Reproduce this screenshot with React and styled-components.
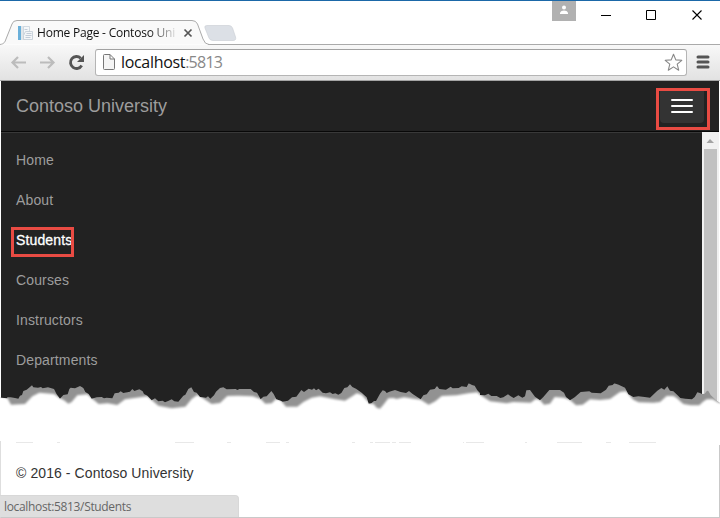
import React from "react";
import styled, { createGlobalStyle } from "styled-components";

const Global = createGlobalStyle`
  * { box-sizing: border-box; }
  body { margin: 0; background: #fff; overflow: hidden; }
`;

const Window = styled.div`
  width: 720px;
  height: 518px;
  display: flex;
  flex-direction: column;
  background: #fff;
  overflow: hidden;
  font-family: "Liberation Sans", Arial, sans-serif;
`;

const TitleBar = styled.div`
  display: flex;
  justify-content: space-between;
  height: 45px;
  flex: none;
  border-top: 1px solid #1b68a8;
`;

const TabStrip = styled.div`
  position: relative;
  width: 240px;
  height: 44px;
`;

const TabShape = styled.svg`
  position: absolute;
  left: 0;
  top: 0;
`;

const TabContent = styled.div`
  position: relative;
  display: flex;
  align-items: center;
  height: 20px;
  margin-top: 22px;
  padding-left: 17px;
`;

const TabTitle = styled.span`
  width: 140px;
  margin-left: 3px;
  white-space: nowrap;
  font: 12px/20px "Open Sans", sans-serif;
  letter-spacing: -0.22px;
  color: #111;
  mask-image: linear-gradient(to right, #000 112px, transparent 142px);
`;

const WindowButtons = styled.div`
  display: flex;
  align-items: flex-start;
`;

const UserBadge = styled.div`
  display: flex;
  width: 24px;
  height: 20px;
  background: #b1b1b1;
`;

const Controls = styled.svg`
  display: block;
`;

const Toolbar = styled.div`
  display: flex;
  align-items: center;
  height: 36px;
  flex: none;
  padding: 0 0 1px 10px;
  background: linear-gradient(#f8f8f8, #e2e2e2);
  border-bottom: 1px solid #a5a5a5;
`;

const NavIcons = styled.svg`
  display: block;
  width: 85px;
  flex: none;
`;

const AddressBar = styled.div`
  display: flex;
  align-items: center;
  width: 592px;
  height: 27px;
  padding: 0 3px 0 7px;
  background: #fff;
  border: 1px solid #b5b5b5;
  border-top-color: #a2a2a2;
  border-radius: 3px;
`;

const Url = styled.span`
  flex: 1;
  margin-left: 6px;
  font: 16px/24px "Open Sans", sans-serif;
  letter-spacing: -0.32px;
  color: #111;
`;

const Port = styled.span`
  color: #888;
  letter-spacing: -0.75px;
`;

const MenuIcon = styled.svg`
  display: block;
  margin-left: 9px;
`;

const Navbar = styled.header`
  display: flex;
  justify-content: space-between;
  align-items: flex-start;
  height: 51px;
  flex: none;
  margin: 0 1px;
  padding-left: 15px;
  background: #222;
  border-bottom: 1px solid #080808;
`;

const Brand = styled.span`
  font-size: 18px;
  line-height: 50px;
  color: #9d9d9d;
`;

const Highlight = styled.div`
  width: ${(p) => p.$w}px;
  height: ${(p) => p.$h}px;
  border: 3px solid #e94b43;
`;

const ToggleHighlight = styled(Highlight)`
  margin: 7px 9px 0 0;
`;

const Toggle = styled.div`
  display: flex;
  flex-direction: column;
  align-items: center;
  gap: 4px;
  width: 44px;
  height: 32px;
  margin-left: 1px;
  padding-top: 8px;
  background: #333;
  border-radius: 0 0 4px 4px;
`;

const Bar = styled.span`
  width: 22px;
  height: 2px;
  border-radius: 1px;
  background: #fff;
`;

const Body = styled.div`
  position: relative;
  display: flex;
  height: 285px;
  flex: none;
`;

const Menu = styled.nav`
  flex: 1;
  height: 249px;
  margin-left: 1px;
  padding: 7px 0 0 15px;
  background: #222;
  border-top: 1px solid #393939;
`;

const MenuItem = styled.div`
  position: relative;
  height: 40px;
  line-height: 40px;
  font-size: 14px;
  letter-spacing: 0.14px;
  color: ${(p) => (p.$active ? "#fff" : "#9d9d9d")};
  -webkit-text-stroke: ${(p) => (p.$active ? "0.3px #fff" : "0")};
`;

const ItemHighlight = styled(Highlight)`
  position: absolute;
  left: -5px;
  top: 7px;
`;

const Scrollbar = styled.div`
  display: flex;
  flex-direction: column;
  align-items: center;
  width: 17px;
  height: 249px;
  margin-right: 1px;
  background: #f1f1f1;
  padding-right: 1px;
`;

const Thumb = styled.div`
  width: 13px;
  flex: 1;
  background: #c1c1c1;
`;

const TornEdge = styled.svg`
  position: absolute;
  left: 0;
  bottom: 0;
`;

const Footer = styled.footer`
  display: flex;
  flex-direction: column;
  height: 101px;
  flex: none;
`;

const Remnants = styled.svg`
  display: block;
  flex: none;
  width: 720px;
`;

const FooterFrame = styled.div`
  display: flex;
  flex-direction: column;
  flex: 1;
  border: solid #c9c9c9;
  border-width: 0 1px 1px 1px;
  border-left-color: #dedede;
`;

const Copyright = styled.p`
  margin: 0;
  padding: 16px 0 0 15px;
  font-size: 14px;
  line-height: 24px;
  letter-spacing: 0.09px;
  color: #333;
`;

const Status = styled.div`
  width: 239px;
  height: 22px;
  margin-top: auto;
  margin-left: -1px;
  padding-left: 4px;
  background: #dedede;
  border-top: 1px solid #d8d8d8;
  border-right: 1px solid #d8d8d8;
  border-radius: 0 4px 0 0;
  font: 12px/22px "Open Sans", sans-serif;
  letter-spacing: -0.34px;
  color: #666;
`;

const tornTop =
  "3,68 22,70 22,67 32,67 45,69 55,71 60,62 66,60 70,48 80,44 96,31 100,37 114,38 123,36 128,40 144,37 162,42 170,58 180,71 190,60 203,58 208,42 212,38 225,40 240,33 250,39 256,51 266,57 275,71 290,67 305,66 312,70 320,68 337,70 344,55 356,53 362,49 370,54 390,50 397,42 403,48 418,43 428,49 432,57 442,62 455,76 465,70 475,79 488,77 495,82 506,77 515,73 523,79 535,80 550,62 556,59 565,42 574,37 582,51 590,53 600,66 618,68 624,64 631,71 642,61 648,50 660,39 670,37 680,43 707,42 712,45 718,42 752,42 762,51 771,53 777,64 782,73 790,65 800,64 814,48 821,57 829,73 842,77 848,80 864,77 876,67 889,65 904,45 912,51 926,41 936,44 942,40 948,46 956,41 968,53 978,55 990,52 998,57 1006,55 1015,59 1024,54 1033,39 1042,37 1050,28 1057,36 1068,41 1085,53 1100,67 1106,86 1114,85 1122,78 1128,78 1140,56 1148,46 1155,48 1160,54 1168,50 1185,45 1202,51 1218,54 1227,48 1238,57 1262,73 1270,61 1280,58 1290,44 1304,42 1311,33 1318,42 1338,44 1352,35 1358,40 1376,39 1385,34 1400,36 1406,25 1416,30 1424,32 1432,46 1440,54 1440,60 1455,61 1465,56 1474,63 1490,63 1501,69 1510,67 1524,58 1532,64 1541,69 1555,61 1567,68 1575,64 1579,46 1590,45 1605,65 1620,76 1630,66 1648,45 1680,45 1692,53 1698,66 1710,76 1724,67 1742,51 1768,49 1775,53 1802,55 1818,44 1826,32 1838,30 1843,25 1856,29 1875,38 1885,58 1900,66 1915,64 1934,66 1950,68 1972,47 1984,39 1993,44 2002,34 2010,47 2020,49 2032,60 2041,69 2056,71 2076,73 2084,66 2092,52 2100,54 2106,57 2114,56 2121,47 2125,48 2132,60 2148,76";

const tornBottom =
  "-80,66 3,66 22,70 33,90 75,88 97,65 118,54 162,58 180,71 192,77 205,87 215,82 232,62 262,59 275,71 296,88 323,86 352,91 375,74 425,67 442,65 455,76 475,93 515,101 556,96 575,73 592,61 603,67 635,88 660,85 682,64 715,63 758,65 782,73 796,87 815,86 828,73 842,77 858,96 892,96 910,82 935,69 960,65 1005,74 1035,78 1052,68 1070,56 1085,60 1110,87 1120,87 1130,99 1140,102 1152,88 1165,71 1180,70 1190,73 1212,68 1240,72 1262,75 1286,90 1306,80 1325,64 1370,62 1405,56 1432,53 1440,60 1470,80 1520,86 1540,82 1592,84 1607,73 1620,76 1632,90 1650,87 1664,67 1692,69 1710,76 1728,92 1748,90 1770,74 1800,76 1830,73 1860,52 1878,50 1900,75 1916,83 1960,84 1980,82 2000,64 2020,64 2030,70 2050,88 2072,92 2098,92 2108,82 2120,74 2138,74 2156,84 2240,84 2240,200 -80,200";

const dashes = [[16,33],[57,60],[175,194],[227,231],[266,280],[286,289],[352,355],[370,373],[375,390],[392,396],[399,411],[463,464],[466,484],[525,527],[557,582],[606,611],[629,656]];

const entries = ["Home", "About", "Students", "Courses", "Instructors", "Departments"];

const Favicon = () => (
  <svg width="17" height="16" viewBox="0 0 17 16">
    <path d="M1 1h3v14H1z" fill="#6ab0da" />
    <path d="M4 1h4v14H4z" fill="#e1e6ea" />
    <path d="M6.500 1.500h6v8h-6z" fill="#f4f7f9" stroke="#c8d2dc" strokeWidth=".8" />
    <path d="M8.500 6.500h7v8h-9v-4z" fill="#f4f6f8" stroke="#c0cad4" strokeWidth=".8" />
    <path d="M7.500 4.500h3M9.500 8.500h5M8.500 10.500h6M8.500 12.500h5" stroke="#c2ccd8" />
  </svg>
);

export default function App() {
  return (
    <Window>
      <Global />
      <TitleBar>
        <TabStrip>
          <TabShape width="720" height="44" viewBox="0 1 720 44">
            <path d="M0 44.5C4 44 5 42 6 39L12 24Q13 20.500 17 20.500H192Q196 20.500 197.500 24L203 39Q205 44.500 209 44.500" fill="#f9f9f9" stroke="#aaa" />
            <path d="M208 44.500H720" stroke="#aaa" />
            <path d="M207 25.500H229Q231.500 25.500 232.500 28L235.500 37Q236.500 40.500 233 40.500H213Q210 40.500 209 38L205 28Q204 25.500 207 25.500Z" fill="#dce0e6" stroke="#cdd1d7" strokeWidth=".7" />
          </TabShape>
          <TabContent>
            <Favicon />
            <TabTitle>Home Page - Contoso Uni</TabTitle>
            <svg width="22" height="20" viewBox="177 23 22 20">
              <path d="M184.500 29.500l7 7m0-7l-7 7" stroke="#555" strokeWidth="1.7" />
            </svg>
          </TabContent>
        </TabStrip>
        <WindowButtons>
          <UserBadge>
            <svg width="24" height="20" viewBox="0 0 24 20">
              <circle cx="12" cy="6.500" r="2" fill="#fff" />
              <path d="M8 13v-1.500Q9 9.500 12 9.500t4 2V13z" fill="#fff" />
            </svg>
          </UserBadge>
          <Controls width="144" height="43" viewBox="576 1 144 43" fill="none" stroke="#000">
            <path d="M601 15.500h10" />
            <path d="M646.500 10.500h9v9h-9z" />
            <path d="M692.500 10.500l9 9m0-9l-9 9" strokeWidth="1.1" />
          </Controls>
        </WindowButtons>
      </TitleBar>
      <Toolbar>
        <NavIcons height="34" viewBox="10 45 85 34" fill="none">
          <path d="M26 62.500H12.500M18 57l-5.500 5.500 5.500 5.500M40 62.500h13.500M48 57l5.500 5.500-5.500 5.500" stroke="#bcbcbc" strokeWidth="2.200" />
          <path d="M81.700 65.500A6 6 0 1 1 80.700 58.200" stroke="#555" strokeWidth="2.800" />
          <path d="M84 55v7h-7z" fill="#555" />
        </NavIcons>
        <AddressBar>
          <svg width="12" height="16" viewBox="0 0 12 16" fill="none" stroke="#777">
            <path d="M.5 1.500Q.5.500 1.500.500H7l4.500 4.500v9.500q0 1-1 1h-9q-1 0-1-1zM7 .5V5h4.500" fill="#f5f5f5" />
          </svg>
          <Url>localhost<Port>:5813</Port></Url>
          <svg width="19" height="19" viewBox="0 0 19 19">
            <path d="M9.500 1.200l2.300 5.700 6 .4-4.600 3.900 1.500 6-5.200-3.300-5.200 3.300 1.500-6L1.200 7.300l6-.4z" fill="#fff" stroke="#888" strokeWidth="1.100" strokeLinejoin="round" />
          </svg>
        </AddressBar>
        <MenuIcon width="14" height="14" viewBox="0 0 14 14">
          <path d="M2 2h10M2 7h10M2 12h10" stroke="#555" strokeWidth="3" strokeLinecap="round" />
        </MenuIcon>
      </Toolbar>
      <Navbar>
        <Brand>Contoso University</Brand>
        <ToggleHighlight $w={54} $h={42}>
          <Toggle><Bar /><Bar /><Bar /></Toggle>
        </ToggleHighlight>
      </Navbar>
      <Body>
        <Menu>
          {entries.map((name) => (
            <MenuItem key={name} $active={name === "Students"}>
              {name}
              {name === "Students" && <ItemHighlight $w={63} $h={30} />}
            </MenuItem>
          ))}
        </Menu>
        <Scrollbar>
          <svg width="16" height="17" viewBox="0 0 16 17">
            <path d="M4.500 11L8 7l4 4z" fill="#a3a3a3" />
          </svg>
          <Thumb />
        </Scrollbar>
        <TornEdge width="720" height="42" viewBox="0 0 2160 126">
          <defs>
            <filter id="soft" x="-2%" y="-20%" width="104%" height="140%">
              <feGaussianBlur stdDeviation="3.5" />
            </filter>
            <clipPath id="below">
              <polygon points={`${tornTop} 2160,84 2160,126 0,126 0,68`} />
            </clipPath>
          </defs>
          <path d="M3 0H2106V90H3z" fill="#222" />
          <path d="M2106 0H2157V84H2106z" fill="#f1f1f1" />
          <path d="M2112 0H2151V84H2112z" fill="#c1c1c1" />
          <g clipPath="url(#below)">
            <path d="M0 0H2160V126H0z" fill="#929292" />
            <polygon points={tornBottom} fill="#fff" filter="url(#soft)" transform="translate(0 -1)" />
          </g>
        </TornEdge>
      </Body>
      <Footer>
        <Remnants height="28" viewBox="0 417 720 28">
          <path d={dashes.map(([a, b]) => `M${a} 442.500H${b}`).join("")} stroke="#e8e8e8" />
          <path d="M.5 441V445" stroke="#dedede" />
        </Remnants>
        <FooterFrame>
          <Copyright>© 2016 - Contoso University</Copyright>
          <Status>localhost:5813/Students</Status>
        </FooterFrame>
      </Footer>
    </Window>
  );
}
